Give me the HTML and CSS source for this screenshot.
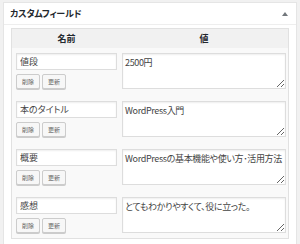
FILE: index.html
```html
<!DOCTYPE html>
<html lang="ja">
<head>
    <meta charset="UTF-8">
    <meta name="viewport" content="width=device-width, initial-scale=1.0">
    <title>カスタムフィールド</title>
    <link rel="stylesheet" href="styles.css">
</head>
<body>
    <div class="postbox">
        <div class="postbox-header">
            <h2 class="postbox-title">カスタムフィールド</h2>
            <span class="toggle-arrow"></span>
        </div>

        <div class="inside">
            <div class="list-table">
                <div class="list-head">
                    <div class="head-cell">名前</div>
                    <div class="head-cell">値</div>
                </div>

                <div class="list-body">
                    <div class="meta-row">
                        <div class="meta-key">
                            <input type="text" class="key-input" value="値段">
                            <div class="meta-actions">
                                <button class="btn-small">削除</button>
                                <button class="btn-small">更新</button>
                            </div>
                        </div>
                        <textarea class="value-input">2500円</textarea>
                    </div>

                    <div class="meta-row">
                        <div class="meta-key">
                            <input type="text" class="key-input" value="本のタイトル">
                            <div class="meta-actions">
                                <button class="btn-small">削除</button>
                                <button class="btn-small">更新</button>
                            </div>
                        </div>
                        <textarea class="value-input">WordPress入門</textarea>
                    </div>

                    <div class="meta-row">
                        <div class="meta-key">
                            <input type="text" class="key-input" value="概要">
                            <div class="meta-actions">
                                <button class="btn-small">削除</button>
                                <button class="btn-small">更新</button>
                            </div>
                        </div>
                        <textarea class="value-input">WordPressの基本機能や使い方･活用方法</textarea>
                    </div>

                    <div class="meta-row">
                        <div class="meta-key">
                            <input type="text" class="key-input" value="感想">
                            <div class="meta-actions">
                                <button class="btn-small">削除</button>
                                <button class="btn-small">更新</button>
                            </div>
                        </div>
                        <textarea class="value-input">とてもわかりやすくて、役に立った。</textarea>
                    </div>
                </div>
            </div>
        </div>
    </div>
</body>
</html>
```

FILE: styles.css
```css
* {
    margin: 0;
    padding: 0;
    box-sizing: border-box;
}

:root {
    --bg: #f1f1f1;
    --white: #ffffff;
    --border: #e5e5e5;
    --border-input: #dddddd;
    --text: #444444;
    --text-dark: #23282d;
    --table-bg: #f9f9f9;
    --head-bg: #f1f1f1;
}

body {
    font-family: "Noto Sans CJK JP", "Noto Sans", sans-serif;
    font-feature-settings: "palt";
    background: var(--bg);
    color: var(--text);
    padding: 2px 3px 0;
    height: 100vh;
    overflow: hidden;
}

.postbox {
    background: var(--white);
    border: 1px solid var(--border);
    border-bottom: 0;
    height: 100%;
}

.postbox-header {
    display: flex;
    align-items: center;
    justify-content: space-between;
    height: 22px;
    padding: 0 8px 0 6px;
    border-bottom: 1px solid #eeeeee;
}

.postbox-title {
    font-size: 9px;
    font-weight: 700;
    color: var(--text-dark);
    letter-spacing: -0.2px;
}

.toggle-arrow {
    width: 0;
    height: 0;
    border-left: 3px solid transparent;
    border-right: 3px solid transparent;
    border-bottom: 4px solid #72777c;
}

.inside {
    padding: 3px 7px 0;
}

.list-table {
    background: var(--table-bg);
    border: 1px solid #e1e1e1;
}

.list-head,
.meta-row {
    display: grid;
    grid-template-columns: 101px 164px;
    column-gap: 5px;
    padding: 0 2px 0 4px;
}

.list-head {
    background: var(--head-bg);
    height: 19px;
    align-items: center;
}

.head-cell {
    font-size: 9px;
    font-weight: 700;
    text-align: center;
    color: var(--text-dark);
}

.list-body {
    display: flex;
    flex-direction: column;
    gap: 12px;
    padding: 5px 0 5px;
}

.meta-key {
    display: flex;
    flex-direction: column;
    gap: 4px;
}

.key-input {
    height: 17px;
    width: 100%;
    border: 1px solid var(--border-input);
    box-shadow: inset 0 1px 2px rgba(0, 0, 0, 0.07);
    background: var(--white);
    font-family: inherit;
    font-feature-settings: "palt";
    font-size: 9px;
    color: var(--text);
    padding: 0 3px;
    outline: none;
}

.meta-actions {
    display: flex;
    gap: 2px;
}

.btn-small {
    height: 15px;
    width: 24px;
    font-family: inherit;
    font-size: 6px;
    color: #666666;
    background: #f7f7f7;
    border: 1px solid #cccccc;
    border-radius: 2px;
    box-shadow: 0 1px 0 #cccccc;
}

.value-input {
    height: 36px;
    width: 100%;
    border: 1px solid var(--border-input);
    box-shadow: inset 0 1px 2px rgba(0, 0, 0, 0.07);
    background: var(--white);
    font-family: inherit;
    font-feature-settings: "palt";
    font-size: 9px;
    letter-spacing: -0.35px;
    line-height: 1.3;
    color: var(--text);
    padding: 3px 2px;
    outline: none;
}
```
